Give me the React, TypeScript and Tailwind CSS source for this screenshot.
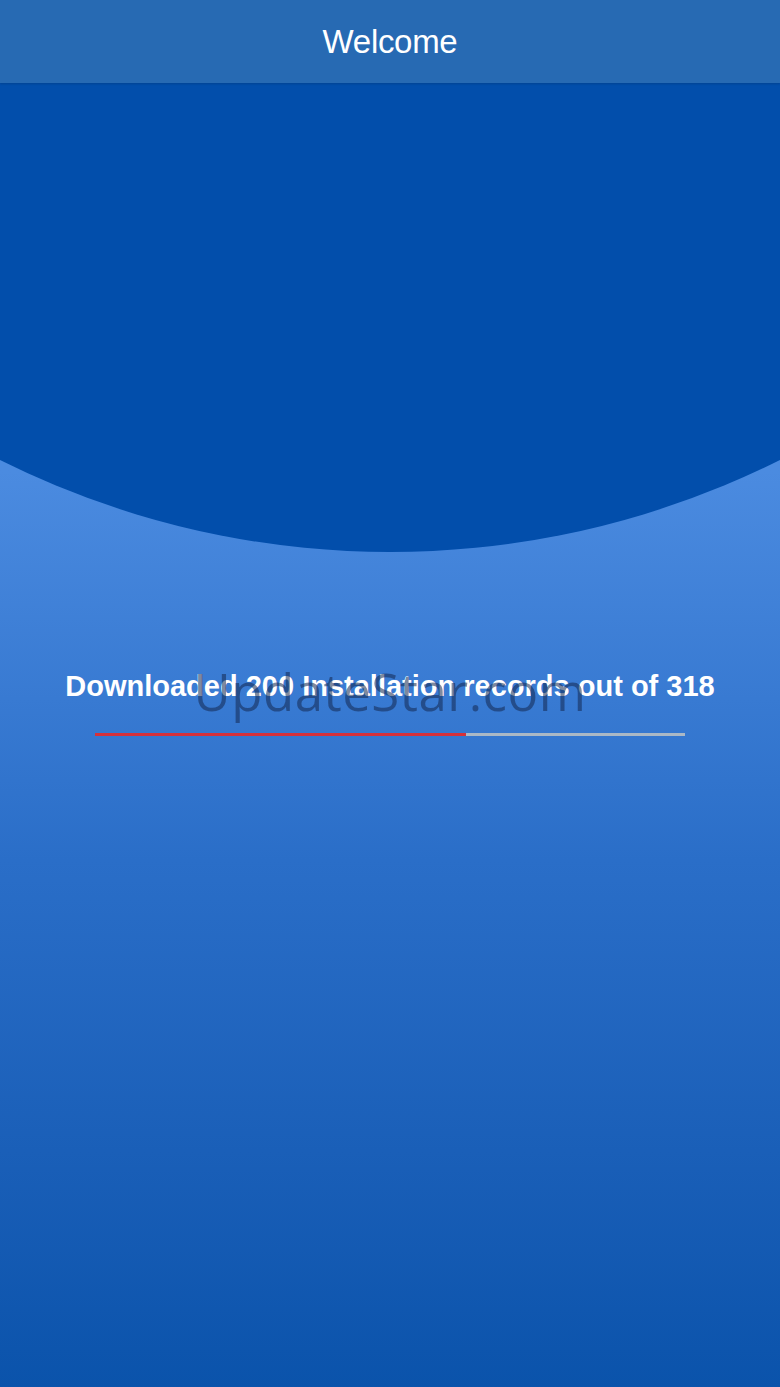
import React from "react";

export default function App() {
  const done = 200;
  const total = 318;
  const pct = (done / total) * 100;
  return (
    <div
      className="relative w-[780px] h-[1387px] overflow-hidden bg-gradient-to-b from-[#4b8be0] from-[34%] via-[#2a6ec8] via-[62%] to-[#0a53ab]"
      style={{ fontFamily: '"Liberation Sans", Arial, sans-serif' }}
    >
      <div className="absolute left-1/2 top-[-1194px] w-[1746px] h-[1746px] -translate-x-1/2 rounded-full bg-[#024eab]" />
      <div className="relative flex flex-col">
        <header className="h-[83px] bg-[#276ab3] flex items-center justify-center shadow-[0_1px_2px_rgba(0,0,0,0.15)]">
          <span className="text-white text-[33px] font-medium tracking-[-0.3px]">Welcome</span>
        </header>
        <main className="flex flex-col items-center pt-[584px]">
          <div className="relative flex justify-center w-full">
            <span className="text-white text-[29px] font-bold leading-[38px]">
              Downloaded {done} Installation records out of {total}
            </span>
            <span
              className="absolute top-[-8px] text-[51px] leading-[64px] text-[rgba(20,40,80,0.55)] tracking-[0.5px]"
              style={{ fontFamily: '"Open Sans", "Liberation Sans", sans-serif' }}
            >
              UpdateStar.com
            </span>
          </div>
          <div className="mt-[28px] w-[590px] h-[3px] bg-[#aab8c6] flex">
            <div className="h-full bg-[#d5313a]" style={{ width: `${pct}%` }} />
          </div>
        </main>
      </div>
    </div>
  );
}
